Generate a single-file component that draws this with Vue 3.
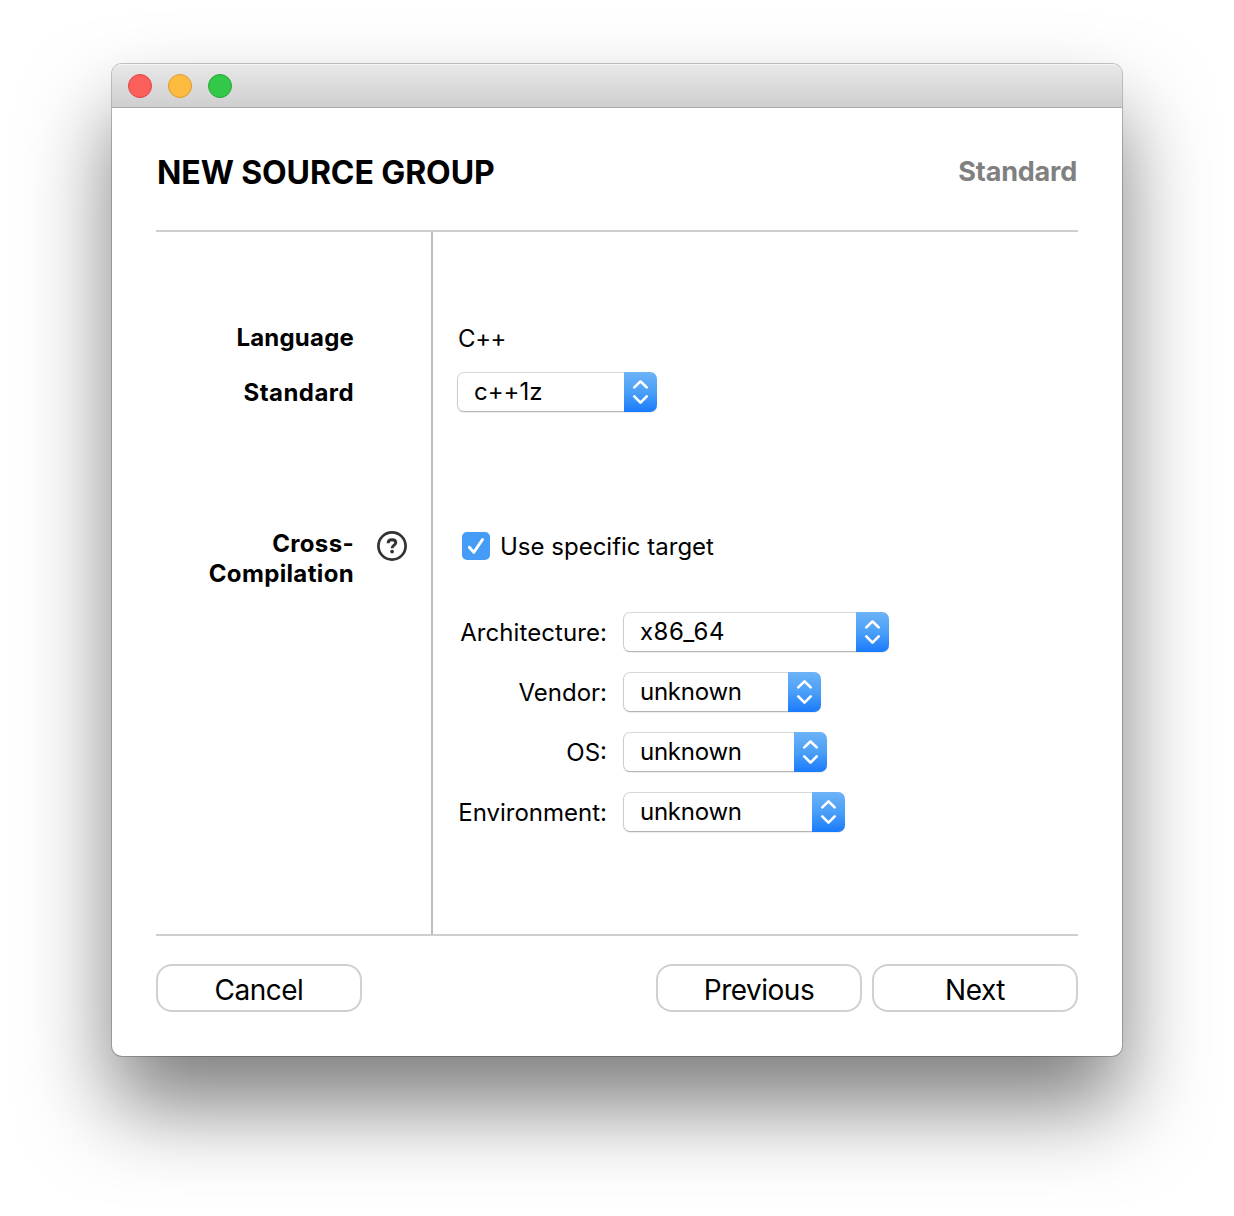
<script setup>
const targets = [
  { label: 'Architecture:', value: 'x86_64', size: 'w-arch', name: 'arch' },
  { label: 'Vendor:', value: 'unknown', size: 'w-vendor', name: 'vendor' },
  { label: 'OS:', value: 'unknown', size: 'w-os', name: 'os' },
  { label: 'Environment:', value: 'unknown', size: 'w-env', name: 'env' },
]
</script>

<template>
  <div class="desktop">
    <div class="window">
      <div class="titlebar">
        <span class="light red"></span>
        <span class="light yellow"></span>
        <span class="light green"></span>
      </div>
      <div class="content">
        <header class="header">
          <h1 class="title">NEW SOURCE GROUP</h1>
          <span class="subtitle">Standard</span>
        </header>
        <main class="form">
          <div class="labels">
            <div class="label language">Language</div>
            <div class="label standard">Standard</div>
            <div class="cross">
              <div class="label cross-label">Cross-<br />Compilation</div>
              <svg class="help" width="30" height="30" viewBox="0 0 30 30" fill="none">
                <circle cx="15" cy="15" r="13.6" stroke="#333" stroke-width="2.7" />
                <path d="M11.1 12.3C11.1 9.8 12.8 8.7 15 8.7C17.3 8.7 18.8 9.9 18.8 11.7C18.8 14.2 15.1 14.2 15.1 17.2" stroke="#333" stroke-width="2.9" />
                <circle cx="15.1" cy="20.6" r="1.9" fill="#333" />
              </svg>
            </div>
          </div>
          <div class="fields">
            <div class="value">C++</div>
            <div class="select w-std">
              <span class="text">c++1z</span>
              <span class="stepper">
                <svg width="33" height="40" viewBox="0 0 33 40" fill="none" stroke="#fff" stroke-width="2.7" stroke-linecap="round" stroke-linejoin="round">
                  <path d="M10.3 15.4L16.5 9.4L22.7 15.4M10.3 24.4L16.5 30.6L22.7 24.4" />
                </svg>
              </span>
            </div>
            <div class="check-row">
              <span class="checkbox">
                <svg width="28" height="28" viewBox="0 0 28 28" fill="none" stroke="#fff" stroke-width="2.8" stroke-linecap="round" stroke-linejoin="round">
                  <path d="M7.3 15.3L11.8 20.4L20.6 7.4" />
                </svg>
              </span>
              <span class="check-text">Use specific target</span>
            </div>
            <div v-for="t in targets" :key="t.name" class="target-row">
              <span class="target-label" :class="'l-' + t.name">{{ t.label }}</span>
              <div class="select" :class="t.size">
                <span class="text" :class="'v-' + t.name">{{ t.value }}</span>
                <span class="stepper">
                  <svg width="33" height="40" viewBox="0 0 33 40" fill="none" stroke="#fff" stroke-width="2.7" stroke-linecap="round" stroke-linejoin="round">
                    <path d="M10.3 15.4L16.5 9.4L22.7 15.4M10.3 24.4L16.5 30.6L22.7 24.4" />
                  </svg>
                </span>
              </div>
            </div>
          </div>
        </main>
        <footer class="footer">
          <button class="btn cancel">Cancel</button>
          <button class="btn previous">Previous</button>
          <button class="btn next">Next</button>
        </footer>
      </div>
    </div>
  </div>
</template>

<style>
body {
  margin: 0;
  background: #fff;
}
</style>

<style scoped>
.desktop {
  box-sizing: border-box;
  width: 1234px;
  height: 1216px;
  padding: 64px 112px 0;
  overflow: hidden;
  background: #fff;
  font-family: Inter, "Liberation Sans", sans-serif;
  font-size: 24px;
  color: #000;
}
.window {
  width: 1010px;
  height: 992px;
  border-radius: 10px;
  background: #fff;
  box-shadow: 0 0 0 1px rgba(0, 0, 0, 0.22), 0 50px 86px rgba(0, 0, 0, 0.51);
}
.titlebar {
  box-sizing: border-box;
  display: flex;
  align-items: center;
  gap: 16px;
  height: 44px;
  padding: 1px 0 0 16px;
  border-bottom: 1px solid #aaa;
  border-radius: 10px 10px 0 0;
  background: linear-gradient(#e8e8e8, #cfcfcf);
  box-shadow: inset 0 2px 0 -1px #f4f4f4;
}
.light {
  box-sizing: border-box;
  width: 24px;
  height: 24px;
  border-radius: 50%;
}
.red { background: #fc605c; border: 1px solid #e0443f; }
.yellow { background: #fdbc40; border: 1px solid #dd9a2b; }
.green { background: #34c84a; border: 1px solid #22a735; }
.content {
  padding: 0 44px;
}
.header {
  display: flex;
  justify-content: space-between;
  height: 122px;
  border-bottom: 2px solid #cfcfcf;
}
.title {
  margin: 0;
  padding: 45px 0 0 1px;
  font-size: 32px;
  line-height: 40px;
  font-weight: 700;
  letter-spacing: -0.1px;
  white-space: nowrap;
}
.subtitle {
  padding: 44px 1px 0 0;
  font-size: 27px;
  line-height: 40px;
  font-weight: 700;
  color: #808080;
  letter-spacing: -0.2px;
}
.form {
  display: flex;
  height: 702px;
  border-bottom: 2px solid #cfcfcf;
}
.labels {
  box-sizing: border-box;
  width: 277px;
  padding-top: 91px;
  border-right: 2px solid #bebebe;
}
.label {
  width: 198px;
  font-weight: 700;
  line-height: 30px;
  text-align: right;
  letter-spacing: 0.35px;
}
.language {
  letter-spacing: 0.2px;
}
.standard {
  margin-top: 25px;
  letter-spacing: 0.45px;
}
.cross {
  display: flex;
  margin-top: 121px;
}
.help {
  margin: 2px 0 0 23px;
}
.fields {
  padding: 92px 0 0 24px;
}
.value {
  padding-left: 1px;
  line-height: 30px;
  letter-spacing: -0.4px;
}
.select {
  box-sizing: border-box;
  display: flex;
  justify-content: space-between;
  height: 40px;
  border-radius: 7px;
  border: 1px solid #cdcdcd;
  border-top-color: #d8d8d8;
  border-bottom-color: #b5b5b5;
  border-right: 0;
  box-shadow: 0 1px 1px rgba(0, 0, 0, 0.08);
}
.text {
  padding-left: 16px;
  line-height: 38px;
}
.v-arch {
  letter-spacing: 0.5px;
}
.v-vendor,
.v-os,
.v-env {
  letter-spacing: -0.25px;
}
.stepper {
  flex: none;
  width: 33px;
  height: 40px;
  margin-top: -1px;
  border-radius: 0 7px 7px 0;
  background: linear-gradient(#6db3f7, #4a9ff8 50%, #1a7bfb);
}
.stepper svg {
  display: block;
}
.w-std { width: 200px; margin-top: 18px; }
.w-arch { width: 266px; }
.w-vendor { width: 198px; }
.w-os { width: 204px; }
.w-env { width: 222px; }
.check-row {
  display: flex;
  align-items: center;
  gap: 10px;
  height: 28px;
  margin: 120px 0 52px 5px;
}
.checkbox {
  width: 28px;
  height: 28px;
  border-radius: 5px;
  background: #459cf7;
}
.checkbox svg {
  display: block;
}
.check-text {
  padding-top: 2px;
  line-height: 28px;
}
.target-row {
  display: flex;
  align-items: center;
  height: 40px;
  margin-bottom: 20px;
}
.target-label {
  width: 150px;
  margin-right: 16px;
  text-align: right;
  white-space: nowrap;
}
.l-arch {
  letter-spacing: 0.08px;
}
.footer {
  display: flex;
  gap: 10px;
  padding-top: 28px;
}
.btn {
  box-sizing: border-box;
  width: 206px;
  height: 48px;
  padding: 4px 0 0;
  border: 2px solid #d0d0d0;
  border-radius: 16px;
  background: #fff;
  font-family: inherit;
  font-size: 28px;
  letter-spacing: -0.5px;
  color: #000;
}
.cancel {
  margin-right: auto;
}
</style>
